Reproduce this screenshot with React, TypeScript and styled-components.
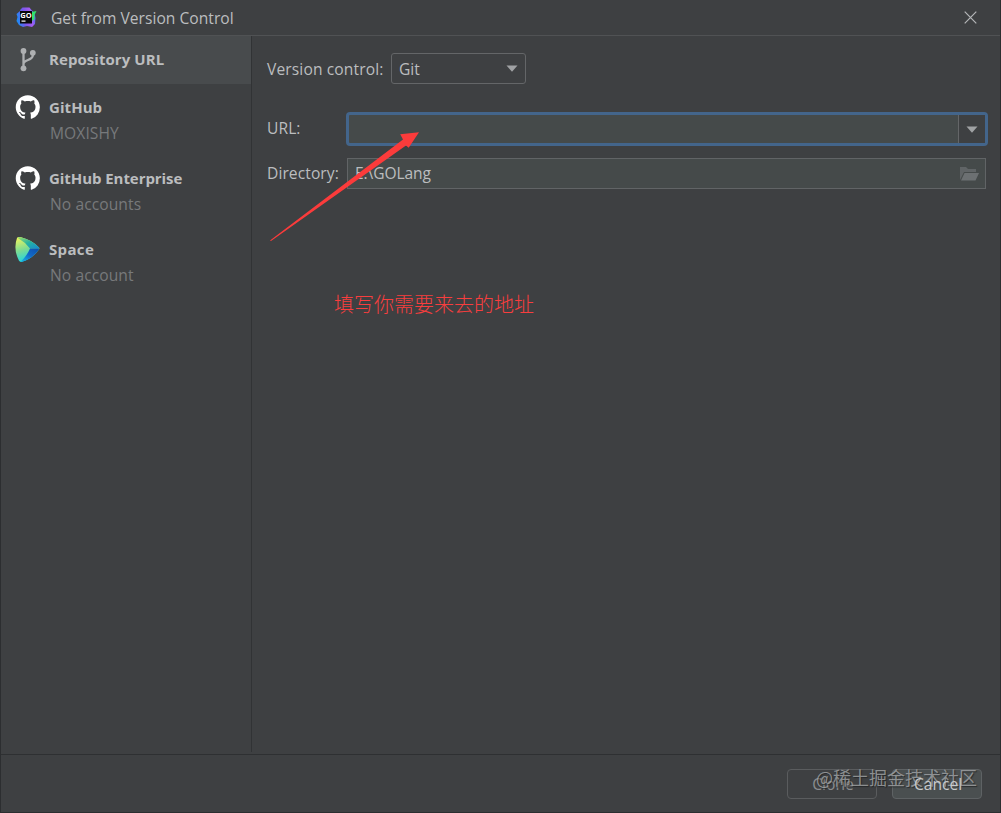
import React from "react";
import styled, { createGlobalStyle } from "styled-components";

const GlobalStyle = createGlobalStyle`
  *, *::before, *::after { box-sizing: border-box; }
  body {
    margin: 0;
    background: #3e4042;
    overflow: hidden;
  }
`;

const Dialog = styled.div`
  position: relative;
  display: flex;
  flex-direction: column;
  width: 1001px;
  height: 813px;
  background: #3e4042;
  border: solid #2c2e30;
  border-width: 0 1px 1px 1px;
  color: #bbbdbf;
  font-family: "Open Sans", "Noto Sans", "Noto Sans CJK SC", sans-serif;
  font-size: 15.6px;
  line-height: 20px;
  white-space: nowrap;
`;

const TitleBar = styled.header`
  display: flex;
  align-items: center;
  height: 36px;
  padding: 0 23px 0 15px;
  border-bottom: 1px solid #505254;
`;

const Title = styled.h1`
  flex: 1;
  margin: 0 0 0 14px;
  font-size: 15.6px;
  font-weight: 400;
  letter-spacing: 0.03px;
`;

const CloseButton = styled.button`
  display: flex;
  padding: 0;
  border: 0;
  background: none;
  color: #b5b7b9;
`;

const Body = styled.div`
  display: flex;
  height: 718px;
`;

const Sidebar = styled.nav`
  width: 251px;
  height: 716px;
  border-right: 1px solid #313335;
`;

const SidebarItem = styled.div<{ $selected?: boolean }>`
  display: flex;
  align-items: flex-start;
  height: ${(p) => (p.$selected ? 48 : 71)}px;
  padding: 11px 0 0 14px;
  background: ${(p) => (p.$selected ? "#484b4d" : "transparent")};
`;

const ItemText = styled.div`
  margin: 2px 0 0 9px;
`;

const ItemTitle = styled.div<{ $spacing?: number }>`
  font-weight: 700;
  font-size: 15px;
  letter-spacing: ${(p) => p.$spacing ?? 0.06}px;
`;

const ItemNote = styled.div`
  margin: 6px 0 0 1px;
  color: #77797b;
  letter-spacing: 0.08px;
`;

const Form = styled.main`
  flex: 1;
  padding: 17px 12px 0 15px;
`;

const Row = styled.div<{ $top?: number }>`
  display: flex;
  align-items: center;
  margin-top: ${(p) => p.$top ?? 0}px;
`;

const FieldLabel = styled.label<{ $width: number; $spacing?: number; $lift?: number }>`
  width: ${(p) => p.$width}px;
  padding-bottom: ${(p) => p.$lift ?? 0}px;
  letter-spacing: ${(p) => p.$spacing ?? 0.08}px;
`;

const Select = styled.div`
  display: flex;
  align-items: center;
  justify-content: space-between;
  width: 135px;
  height: 31px;
  padding: 0 7px;
  border: 1px solid #646668;
  border-radius: 3px;
`;

const UrlField = styled.div`
  display: flex;
  flex: 1;
  height: 34px;
  border: 3px solid #43658b;
  border-radius: 4px;
  background: #454a4a;
`;

const UrlToggle = styled.div`
  display: flex;
  align-items: center;
  justify-content: center;
  width: 27px;
  margin-left: auto;
  border-left: 1px solid #646668;
  background: #3e4042;
`;

const DirectoryField = styled.div`
  display: flex;
  align-items: center;
  justify-content: space-between;
  flex: 1;
  height: 31px;
  margin: 0 2px 0 1px;
  padding: 0 6px 0 7px;
  border: 1px solid #616466;
  background: #454a4a;
`;

const DirectoryPath = styled.span`
  padding-bottom: 2px;
  letter-spacing: -0.1px;
`;

const Footer = styled.footer`
  display: flex;
  justify-content: flex-end;
  gap: 15px;
  flex: 1;
  padding: 14px 18px 0 0;
  border-top: 1px solid #2e3032;
`;

const Button = styled.button<{ $muted?: boolean }>`
  width: 90px;
  height: 30px;
  padding: 0 0 0 2px;
  border: 1px solid ${(p) => (p.$muted ? "#5a5c5e" : "#5e6264")};
  border-radius: 4px;
  background: ${(p) => (p.$muted ? "transparent" : "#4a4f50")};
  color: ${(p) => (p.$muted ? "#8a8c8e" : "#c8cacc")};
  font: inherit;
`;

const ButtonLabel = styled.span<{ $raised?: boolean }>`
  position: relative;
  z-index: ${(p) => (p.$raised ? 2 : 0)};
`;

const Arrow = styled.svg`
  position: absolute;
  left: 264px;
  top: 125px;
`;

const Annotation = styled.div`
  position: absolute;
  left: 333px;
  top: 290px;
  color: #f83e3e;
  font-family: "Noto Sans CJK SC", sans-serif;
  font-size: 20px;
  font-weight: 300;
  line-height: 28px;
`;

const Watermark = styled.div`
  position: absolute;
  z-index: 1;
  left: 815px;
  top: 764px;
  color: rgba(170, 172, 174, 0.75);
  font-family: "Noto Sans CJK SC", sans-serif;
  font-size: 18px;
  line-height: 26px;
  text-shadow: 1px 1px 1px rgba(30, 32, 34, 0.75);
`;

const GoLandIcon = () => (
  <svg width="21" height="21" viewBox="0 0 21 21">
    <defs>
      <linearGradient id="goland" x1="0" y1="0.6" x2="1" y2="0.4">
        <stop offset="0" stopColor="#168ff5" />
        <stop offset="0.4" stopColor="#7657ed" />
        <stop offset="0.75" stopColor="#a65cf0" />
        <stop offset="1" stopColor="#476cf5" />
      </linearGradient>
    </defs>
    <path d="M4.5 2.5 6.5.5h7l2 2.5 3 3 1 5-.5 6-3 3-5-1-4 1-4-2-2.5-4 1-4-1-3 3.5-3z" fill="url(#goland)" />
    <path d="m15 5 5.5-1-2 4v4L16 14z" fill="#31e26d" />
    <path d="M4 4h12v12.5H4z" fill="#08080b" />
    <text x="4.3" y="10.5" fill="#fff" fontFamily="Open Sans, sans-serif" fontSize="7.5" fontWeight="700">GO</text>
    <path d="M5.5 13.5h4v1.2h-4z" fill="#fff" />
  </svg>
);

const CloseIcon = () => (
  <svg width="13" height="13" viewBox="0 0 13 13">
    <path d="m.7.7 11.6 11.6M12.3.7.7 12.3" stroke="currentColor" strokeWidth="1.2" />
  </svg>
);

const BranchIcon = () => (
  <svg width="25" height="25" viewBox="0 0 25 25">
    <path d="M8.5 4v18M17.8 6v2.5c0 5-9.3 4-9.3 8.5" fill="none" stroke="#aeb0b2" strokeWidth="2.3" />
    <circle cx="8.5" cy="4" r="2.9" fill="#aeb0b2" />
    <circle cx="17.8" cy="5.8" r="2.9" fill="#aeb0b2" />
    <circle cx="8.5" cy="21.3" r="2.9" fill="#aeb0b2" />
  </svg>
);

const GitHubIcon = () => (
  <svg width="25" height="25" viewBox="-0.5 -0.2 16.6 16.6">
    <path
      fill="#fff"
      d="M8 0C3.58 0 0 3.58 0 8c0 3.54 2.29 6.53 5.47 7.59.4.07.55-.17.55-.38 0-.19-.01-.82-.01-1.49-2.01.37-2.53-.49-2.69-.94-.09-.23-.48-.94-.82-1.13-.28-.15-.68-.52-.01-.53.63-.01 1.08.58 1.23.82.72 1.21 1.87.87 2.33.66.07-.52.28-.87.51-1.07-1.78-.2-3.64-.89-3.64-3.95 0-.87.31-1.59.82-2.15-.08-.2-.36-1.02.08-2.12 0 0 .67-.21 2.2.82.64-.18 1.32-.27 2-.27s1.36.09 2 .27c1.53-1.04 2.2-.82 2.2-.82.44 1.1.16 1.92.08 2.12.51.56.82 1.27.82 2.15 0 3.07-1.87 3.75-3.65 3.95.29.25.54.73.54 1.48 0 1.07-.01 1.93-.01 2.2 0 .21.15.46.55.38A8.01 8.01 0 0 0 16 8c0-4.42-3.58-8-8-8z"
    />
  </svg>
);

const SpaceIcon = () => (
  <svg width="25" height="25" viewBox="0 0 25 25">
    <defs>
      <linearGradient id="spaceLeft" x1="0.2" y1="0" x2="0.5" y2="1">
        <stop offset="0" stopColor="#eff45c" />
        <stop offset="0.5" stopColor="#7cdc93" />
        <stop offset="1" stopColor="#16d3ea" />
      </linearGradient>
      <linearGradient id="spaceTop" x1="0" y1="0" x2="1" y2="1">
        <stop offset="0" stopColor="#a5df65" />
        <stop offset="0.5" stopColor="#25b3a1" />
        <stop offset="1" stopColor="#168bd2" />
      </linearGradient>
      <linearGradient id="spaceBottom" x1="0" y1="1" x2="1" y2="0">
        <stop offset="0" stopColor="#17bce8" />
        <stop offset="0.5" stopColor="#1267c7" />
        <stop offset="1" stopColor="#0c4fac" />
      </linearGradient>
    </defs>
    <path d="M2 1Q3-.5 6 .3 17 3 24 10.5q1 1-.2 2.2Q17 22 7 24.8q-2 .6-3-1Q-2 12 2 1z" fill="url(#spaceLeft)" />
    <path d="M2.4.8Q4-.3 6 .3 17 3 24 10.5l.3 1H15Q10 5 2.4.8z" fill="url(#spaceTop)" />
    <path d="M15 11.5h9.3l-.5 1.2Q17 22 7 24.8l-1.6.1Q12 19 15 11.5z" fill="url(#spaceBottom)" />
  </svg>
);

const Chevron = () => (
  <svg width="12" height="7" viewBox="0 0 12 7">
    <path d="M.5.5h11L6 6.7z" fill="#a0a2a4" />
  </svg>
);

const FolderIcon = () => (
  <svg width="19" height="14" viewBox="0 0 19 14">
    <path d="M0 13V0h6l2 2h8v3H4z" fill="#606466" />
    <path d="M4.5 6H19l-3.5 7.5H1z" fill="#6c7072" />
  </svg>
);

export default function App() {
  return (
    <>
      <GlobalStyle />
      <Dialog>
        <TitleBar>
          <GoLandIcon />
          <Title>Get from Version Control</Title>
          <CloseButton aria-label="Close">
            <CloseIcon />
          </CloseButton>
        </TitleBar>
        <Body>
          <Sidebar>
            <SidebarItem $selected>
              <BranchIcon />
              <ItemText>
                <ItemTitle>Repository URL</ItemTitle>
              </ItemText>
            </SidebarItem>
            <SidebarItem>
              <GitHubIcon />
              <ItemText>
                <ItemTitle>GitHub</ItemTitle>
                <ItemNote>MOXISHY</ItemNote>
              </ItemText>
            </SidebarItem>
            <SidebarItem>
              <GitHubIcon />
              <ItemText>
                <ItemTitle $spacing={-0.06}>GitHub Enterprise</ItemTitle>
                <ItemNote>No accounts</ItemNote>
              </ItemText>
            </SidebarItem>
            <SidebarItem>
              <SpaceIcon />
              <ItemText>
                <ItemTitle $spacing={0.35}>Space</ItemTitle>
                <ItemNote>No account</ItemNote>
              </ItemText>
            </SidebarItem>
          </Sidebar>
          <Form>
            <Row>
              <FieldLabel $width={124} $spacing={0.12}>Version control:</FieldLabel>
              <Select>
                Git
                <Chevron />
              </Select>
            </Row>
            <Row $top={28}>
              <FieldLabel $width={79} $lift={2}>URL:</FieldLabel>
              <UrlField>
                <UrlToggle>
                  <Chevron />
                </UrlToggle>
              </UrlField>
            </Row>
            <Row $top={12}>
              <FieldLabel $width={79} $lift={2}>Directory:</FieldLabel>
              <DirectoryField>
                <DirectoryPath>E:\GOLang</DirectoryPath>
                <FolderIcon />
              </DirectoryField>
            </Row>
          </Form>
        </Body>
        <Footer>
          <Button $muted>
            <ButtonLabel>Clone</ButtonLabel>
          </Button>
          <Button>
            <ButtonLabel $raised>Cancel</ButtonLabel>
          </Button>
        </Footer>
        <Arrow width="160" height="120" viewBox="0 0 160 120">
          <path d="M5 115.5 138 14.5 135.2 9.3 154 7.3 143.7 22.7 141 20.5 6 116z" fill="#fb3b3b" />
        </Arrow>
        <Annotation>填写你需要来去的地址</Annotation>
        <Watermark>@稀土掘金技术社区</Watermark>
      </Dialog>
    </>
  );
}
